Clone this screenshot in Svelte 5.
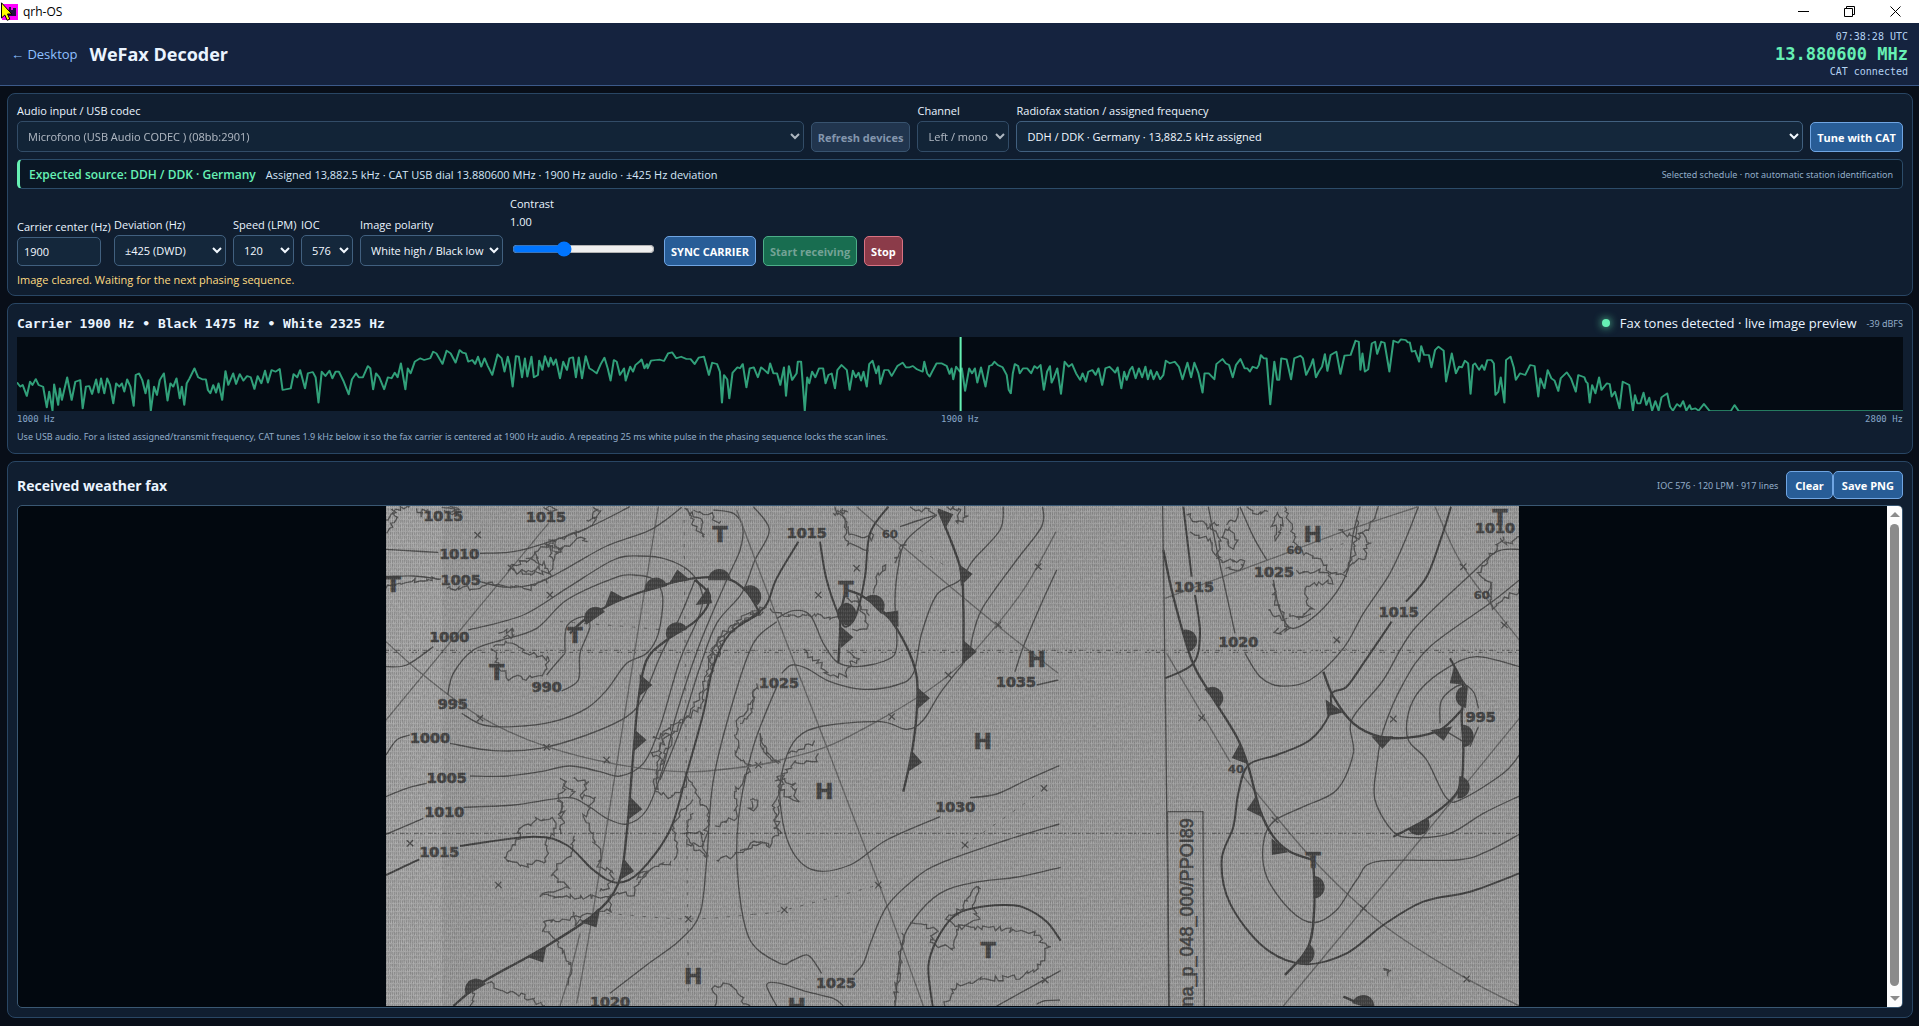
<!-- WeFax Decoder: receiver controls, audio spectrum and received chart -->
<script lang="ts">
  type Pt = [number, number];

  let device = $state("usb");
  let channel = $state("left");
  let station = $state("ddh");
  let carrier = $state("1900");
  let deviation = $state("425");
  let speed = $state("120");
  let ioc = $state("576");
  let polarity = $state("white");
  let contrast = $state(1);

  function parse(s: string, dx = 0): Pt[] {
    return s.trim().split(/\s+/).map((p) => {
      const [x, y] = p.split(",").map(Number);
      return [x + dx, y] as Pt;
    });
  }

  // Catmull-Rom through all the points
  function smooth(s: string): string {
    const p = parse(s);
    let d = `M${p[0][0]} ${p[0][1]}`;
    for (let i = 0; i < p.length - 1; i++) {
      const a = p[i - 1] ?? p[i];
      const b = p[i];
      const c = p[i + 1];
      const e = p[i + 2] ?? c;
      d += `C${b[0] + (c[0] - a[0]) / 6} ${b[1] + (c[1] - a[1]) / 6} `;
      d += `${c[0] - (e[0] - b[0]) / 6} ${c[1] - (e[1] - b[1]) / 6} ${c[0]} ${c[1]}`;
    }
    return d;
  }

  // Rough coastline between the points, always the same for the same input
  function coast(s: string): string {
    const p = parse(s);
    let seed = p[0][0] * 31 + p[0][1] * 17 + 7;
    const rnd = () => {
      seed = (seed * 1103515245 + 12345) % 2147483648;
      return seed / 2147483648 - 0.5;
    };
    let d = `M${p[0][0]} ${p[0][1]}`;
    for (let i = 1; i < p.length; i++) {
      const [x0, y0] = p[i - 1];
      const [x1, y1] = p[i];
      const n = Math.max(2, Math.round(Math.hypot(x1 - x0, y1 - y0) / 9));
      for (let k = 1; k <= n; k++) {
        const t = k / n;
        d += `L${(x0 + (x1 - x0) * t + rnd() * 16).toFixed(1)} ${(y0 + (y1 - y0) * t + rnd() * 16).toFixed(1)}`;
      }
    }
    return d;
  }

  const sweep = [
    ...parse(`42,277 50,290 56,285 66,318 74,275 80,285 88,267 95,285 106,290 115,352 121,305 129,362 133,283 143,345 147,295 152,330 165,262 176,330 185,275 197,270 203,355 211,290 219,288 226,312 236,268 242,308 248,265 256,310 263,265 270,285 278,340 285,280 293,290 299,280 305,305 312,268 320,290 328,348 333,255 341,250 349,270 357,310 364,270 370,362 378,290 385,315 392,270 402,250 411,332 418,280 425,290 433,265 441,325 446,290 452,345 458,280 465,265 477,235 486,262 496,268 505,268 510,300 516,310 523,285 530,308 536,280 545,330 553,243 560,285 572,250 579,282 588,252 597,272 606,258 615,262 624,297 632,258 641,280 650,242 657,278 666,240 676,245 686,237 693,300 713,295 720,252 729,262 736,240 748,295 755,250 767,246 774,262 781,338 789,245 798,258 808,242 815,265 823,245 831,245 843,275 855,313 863,268 873,250 880,262 890,262 902,228 908,235 915,298 922,250 930,262 942,298 951,262 960,265 968,248 975,262 983,220 994,298 1000,235 1007,250 1017,215 1030,205 1040,210 1055,205 1062,185 1070,190 1085,222 1095,182 1105,190 1117,218 1127,180 1134,188 1142,190 1148,215 1158,210 1165,222 1172,200 1180,230 1188,205 1196,228 1207,255 1220,193 1230,205 1237,245 1245,200 1250,225 1257,290 1265,198 1272,200 1280,262 1287,205 1293,260 1303,200 1309,262 1319,255 1322,212 1330,240 1336,198 1345,230 1350,203 1357,225 1363,208 1373,265 1381,215 1390,240 1396,205 1405,202 1412,262 1419,202 1427,265 1436,198 1445,235 1452,240 1463,250 1473,222 1482,203 1490,235 1497,272 1505,210 1512,215 1520,255 1530,235 1534,272 1545,230 1552,245 1558,225 1568,215`),
    ...parse(`5,208 12,235 18,222 20,235 28,212 40,210 50,209 60,213 70,190 80,187 90,205 102,200 115,207 125,207 135,222 145,203 158,200 170,255 178,218 190,222 197,245 202,338 207,255 215,268 220,325 228,248 240,232 246,235 253,222 262,292 270,235 280,232 290,262 298,232 306,240 315,250 320,220 328,250 337,250 345,285 354,232 359,318 366,228 374,270 385,250 388,215 396,215 405,362 411,262 416,280 423,245 431,262 440,235 450,235 456,280 463,255 471,250 479,295 485,240 495,225 508,240 515,300 523,242 530,262 537,248 543,272 549,245 557,290 563,222 571,212 580,250 586,228 590,282 600,240 610,240 618,258 632,228 645,218 653,232 662,232 670,228 680,238 694,245 698,215 705,250 711,260 718,243 728,220 740,220 753,228 760,252 765,235 769,268 776,230 785,245 790,235 798,303 808,235 815,250 822,235 828,278 837,232 848,290 857,228 864,225 870,215 878,225 890,232 900,255 905,300 910,310 915,250 920,222 928,228 932,250 940,235 950,235 960,250 968,228 975,235 983,225 991,300 999,245 1006,228 1010,278 1016,262 1024,235 1033,312 1042,215 1052,230 1060,222 1070,250 1080,270 1086,250 1094,275 1100,245 1110,240 1118,255 1125,235 1134,285 1142,235 1152,230 1160,240 1166,248 1172,232 1181,295 1188,245 1194,270 1202,240 1208,230 1216,265 1224,235 1232,262 1240,230 1246,268 1253,240 1260,268 1268,245 1276,268 1284,255 1290,212 1300,220 1312,215 1322,230 1331,268 1343,218 1352,262 1360,218 1370,250 1380,308 1385,250 1395,250 1409,268 1414,222 1429,207 1437,220 1445,225 1454,262 1462,225 1473,207 1483,235 1490,235 1496,245 1503,230 1513,235 1518,225 1523,195 1530,205 1537,205 1546,343 1556,215 1563,270`, 1568),
    ...parse(`0,270 5,205 18,208 29,268 37,205 52,197 58,205 66,255 78,225 83,207 90,262 97,245 105,230 112,192 118,243 126,195 140,185 150,252 160,197 175,195 187,152 195,155 199,240 204,190 210,245 218,238 227,160 235,155 240,192 250,155 258,158 270,245 280,152 292,158 298,148 310,150 315,157 320,157 325,185 333,182 343,215 348,168 355,195 367,195 373,232 382,180 390,170 403,182 409,275 423,190 433,250 441,230 448,232 455,212 463,220 469,312 475,225 480,220 490,240 497,225 503,240 510,210 520,210 526,220 530,315 537,305 543,262 552,338 556,210 567,200 575,232 580,270 590,250 603,255 615,225 626,228 635,320 640,265 650,295 658,240 667,265 675,272 684,303 690,265 705,247 715,265 727,305 733,255 748,262 752,275 756,280 761,338 767,285 775,310 784,262 790,300 803,280 810,282 815,320 823,305 834,355 842,275 858,285 867,362 872,315 878,340 885,340 893,308 900,345 907,323 914,362 922,333 930,362 937,322 951,310 958,350 965,362 975,342 983,350 990,333 998,362 1006,345 1010,358 1020,355 1028,362 1041,342 1055,363 1107,363 1116,345 1126,363 1529,363`, 3136),
  ];
  const trace = sweep.map((p) => p.join(",")).join(" ");

  // The chart is stored as three sheets side by side
  const sheets = [
    {
      x: 0,
      thin: [
        "18,148 100,153 175,157",
        "300,160 400,155 500,128 620,85 750,20",
        "18,230 100,228 180,238",
        "300,245 380,262 470,250 560,205 680,138 800,95 850,65 905,22",
        "265,390 430,345 560,265 700,180 780,168 860,178 930,215 965,275 960,340 900,480 840,680 790,790 720,828 660,815 570,798 480,815 380,828 270,828",
        "365,420 470,385 560,300 700,235 760,225 820,238 848,290 835,400 800,460 740,490 680,570 620,625 520,665 400,680 310,675 245,640",
        "365,420 280,450 220,520 203,585",
        "18,500 80,495 160,440",
        "210,730 340,752 480,745 620,705 740,650 790,590 840,470 900,350 945,240",
        "18,765 50,720 90,705",
        "18,890 80,865 140,850",
        "250,922 400,915 560,893 620,915 680,955 740,972 800,930 850,800 890,640 960,430 1040,240 1080,150 1088,80 1060,40 1000,30",
        "18,1003 60,985 130,955",
        "1190,365 1120,430 1060,600 1000,840 980,1080 960,1240 900,1320 800,1395 690,1480",
        "1190,560 1120,740 1075,960 1075,1150 1110,1320 1200,1390 1240,1380 1285,1366 1325,1420",
        "1120,20 1168,90 1125,180 1085,280 1010,370 960,500 900,690 840,840",
        "555,460 560,380 610,350 630,380 600,460 595,540 545,573",
        "555,460 520,500 500,525",
      ],
      bold: [
        "240,1038 460,1010 560,1035 640,1110 710,1148 780,1115 870,990 920,820 970,640 1000,500 1050,400 1140,340",
        "18,1125 118,1078",
      ],
      fronts: [
        "570,400 620,355 720,300 850,255 940,235 1040,235 1100,275 1140,340",
        "945,240 990,290 950,360 860,420 800,480 775,600 760,760 740,1000 715,1150 640,1245 480,1350 310,1445 220,1518",
      ],
      grid: [
        "18,660 505,70",
        "835,20 760,480 640,1230 590,1510",
        "600,1300 570,1420 540,1518",
        "18,425 130,525 300,650 500,740 750,800 950,815 1200,785",
      ],
      dots: ["912,60 925,1500", "680,1240 925,1257 1120,1243", "540,365 780,383 930,400"],
      coasts: [
        "340,440 400,425 440,455 510,480 490,530 380,535 345,480 340,440",
        "355,400 400,388 405,410 370,412",
        "18,60 60,30 90,18", "20,100 50,50 35,20", "110,25 125,50 140,20",
        "185,22 235,26 190,34 232,38 205,20", "490,22 525,28 495,30",
        "390,200 440,185 490,140 540,120 600,95 640,70 650,30",
        "420,215 500,220 490,190 440,180", "500,130 530,160 600,110 630,130",
        "400,210 450,225 480,195 470,160", "505,120 540,150 520,180",
        "620,60 665,40 640,25", "500,250 520,180 500,130 550,150",
        "200,265 260,265 330,250 440,270 500,240", "18,265 100,240 180,235",
        "920,25 960,60 975,115 940,80 920,25", "940,30 990,45 1020,70",
        "1160,320 1090,350 1040,390 1000,440 970,560 920,650 850,700 830,800 830,870",
        "1150,335 1080,370 1030,410 1005,480 960,620 900,670 870,730 840,800",
        "1140,330 1060,380 1020,420 985,470 1000,490",
        "820,715 870,700 820,760 850,790 825,840 830,870 870,895 910,860 920,820",
        "540,835 560,850 540,880 550,940 545,1000", "535,900 550,930 535,960",
        "580,835 625,850 600,890 645,890 610,950 640,1020 660,1060 655,1100 690,1110 700,1140 660,1180",
        "550,850 580,870 575,885", "480,1190 560,1160 520,1120 545,1080 580,1060 580,1000",
        "480,1190 600,1190 650,1190 760,1180 780,1140 830,1100 880,1090",
        "415,985 470,960 520,960 525,1000 500,1020 500,1080 440,1095 380,1085 380,1050 415,1025 415,985",
        "940,900 900,930 880,980 890,1080", "940,940 920,1000 940,1040 980,1070 960,990 915,1000",
        "920,820 960,900 985,940 975,1020 950,1040 920,1020",
        "1130,550 1110,620 1070,670 1070,770 1110,790 1090,850 1060,880 1075,950 1010,980",
        "1010,1080 1080,1060 1130,1020 1170,1040", "1140,700 1160,770 1200,785",
        "490,1265 550,1265 620,1240 690,1230 690,1190", "490,1290 530,1320 570,1390 570,1450",
        "580,1235 590,1270 620,1260", "490,1265 490,1300",
        "320,1450 370,1470 440,1490 500,1518", "280,1470 275,1518",
        "1005,1518 1000,1460 1050,1450 1070,1480 1110,1518", "770,1140 800,1110 780,1130",
      ],
      domes: [[645, 352, -35], [828, 264, -15], [1018, 238, 0], [1112, 288, 50], [890, 398, -25], [287, 1467, -30]],
      spikes: [[705, 305, -20], [898, 243, -10], [968, 290, 125], [782, 555, 90], [765, 720, 90], [752, 925, 95], [728, 1108, 100], [632, 1252, 150], [472, 1357, 150]],
      crosses: [[293, 105], [510, 285], [300, 655], [500, 742], [90, 1030], [355, 1155], [925, 1257], [680, 780], [1135, 795], [393, 203]],
      labels: [[190, 62, "1015"], [498, 65, "1015"], [238, 176, "1010"], [242, 254, "1005"], [208, 427, "1000"], [500, 575, "990"], [218, 628, "995"], [150, 730, "1000"], [200, 850, "1005"], [193, 950, "1010"], [178, 1070, "1015"], [690, 1520, "1020"]],
      centres: [[1020, 127, "T"], [585, 428, "T"], [350, 540, "T"], [40, 277, "T"], [940, 1452, "H"]],
      degrees: [],
    },
    {
      x: 1080,
      thin: [
        "670,490 600,580 550,660 500,688 420,665 250,678 170,715 130,800 120,900 150,1040 220,1110 330,1095 440,1020 600,950",
        "690,893 770,882 860,840 958,797",
        "590,45 500,120 475,200 465,300 470,440 440,480 350,500 290,485 250,430 210,345 160,332 110,355",
        "480,80 540,60 590,45",
        "790,20 780,90 700,180 660,240 590,285 545,400 520,520 470,555 370,568 270,545 200,505 155,495 125,520",
        "908,20 905,80 830,180 730,320 700,400 690,450 670,490",
        "950,210 900,320 850,440 825,515",
        "890,555 955,540",
        "958,972 800,1020 600,1090 520,1140 440,1220 395,1320 370,1390 340,1425",
        "962,1102 840,1130 700,1148 600,1180 520,1260 485,1340 465,1518",
        "770,1518 962,1412",
        "890,1512 915,1502 960,1500",
        "110,1518 80,1455 120,1450 200,1475 280,1495 310,1518",
      ],
      bold: [
        "175,125 110,235 75,320 0,375",
        "240,125 260,240 300,355 320,380 350,340 375,230 390,100 445,20",
        "578,1518 565,1400 590,1320 640,1250 700,1225 790,1215 850,1222 920,1265 962,1322",
      ],
      fronts: [
        "318,270 302,340 300,400 295,490",
        "320,270 370,290 440,345 500,440 530,530 530,640 515,760 490,875",
        "595,30 660,200 670,320 670,490",
      ],
      grid: [
        "948,95 850,270 715,440 620,530 520,600 400,670 260,740 100,785 0,803",
        "350,20 500,150 770,375 955,520",
        "-10,30 110,350 260,740 420,1160 490,1350 550,1518",
      ],
      dots: ["40,1243 133,1230 415,1155", "912,865 840,920 740,990 675,1035", "540,150 620,200"],
      coasts: [
        "285,20 310,60 320,130 380,145", "300,30 330,100 390,115 400,105", "280,40 320,30 300,20",
        "400,280 410,230 440,200 430,220", "465,190 480,150 495,130", "190,450 230,480 260,520 320,530 330,490 360,475 320,460",
        "350,285 370,350 380,390 340,390", "320,295 360,310 390,340", "145,760 190,740 225,725", "235,760 225,785 160,785 130,830",
        "110,830 160,850 170,900 130,890 125,830 105,850", "510,20 590,40", "620,20 660,30 650,70 680,50 680,20",
        "0,1050 60,1030 90,1040 110,1000 100,920 120,850", "120,1000 110,960 115,900",
        "650,1240 680,1200 720,1155 700,1210 715,1260 640,1280 620,1250 650,1240",
        "510,1270 590,1290 570,1320 600,1340 640,1345 660,1280 780,1285 880,1300 925,1340 900,1400 840,1430 710,1440 650,1460 610,1518",
        "0,670 30,650 40,560", "60,700 80,760 120,785", "90,325 160,350 210,345 290,355",
        "30,900 45,895 48,920 32,930 30,900", "485,1300 480,1400 460,1518",
      ],
      domes: [[402, 316, 45], [318, 342, 90], [322, 342, -90]],
      spikes: [[452, 358, 40], [305, 412, 90], [607, 55, 70], [663, 225, 85], [675, 455, 90], [535, 595, 90], [512, 783, 98]],
      crosses: [[350, 205], [235, 285], [625, 525], [455, 650], [675, 1035], [912, 865], [895, 200], [133, 1230], [415, 1155], [915, 1440], [775, 375]],
      labels: [[200, 113, "1015"], [117, 563, "1025"], [828, 560, "1035"], [646, 937, "1030"], [288, 1463, "1025"]],
      centres: [[890, 500, "H"], [728, 748, "H"], [253, 898, "H"], [745, 1375, "T"], [170, 1541, "H"], [318, 290, "T"]],
      degrees: [[450, 115, "60"]],
    },
    {
      x: 2250,
      thin: [
        "235,20 265,170 315,400",
        "345,460 390,530 450,558 540,540 640,445 700,340 780,220 830,110 865,20",
        "330,20 370,110 410,180",
        "430,240 450,330 490,385 580,325 650,220 670,100 690,20",
        "1168,148 1100,155 1020,225 850,390 760,540 665,660 670,760 620,870 520,920 430,965 400,1030 410,1130 480,1230 550,1268 620,1230 680,1140 740,1085 980,1080 1070,1055 1168,1003",
        "1168,240 1080,310 900,440 820,550 760,690 740,800 735,900 790,995 850,1013 960,1000 1060,940 1168,888",
        "1168,500 1040,470 950,505 870,570 835,640 835,720 890,780 950,895 1000,895 1120,820 1168,765",
        "930,670 935,600 990,555 1030,575 1045,625",
        "1045,680 1020,740", "1000,725 950,695", "98,18 105,520 118,1518",
      ],
      bold: [
        "160,20 185,230",
        "195,285 210,400 190,490 105,535",
        "963,20 935,110 890,230 828,305",
        "785,365 700,490 650,560 605,580 600,640 540,720 440,765 355,795 325,880 310,980 275,1080 300,1210 400,1340 520,1392 650,1360 760,1275 880,1205 1020,1175 1168,1120",
      ],
      fronts: [
        "100,150 130,290 185,480 240,580 320,710 355,800 390,930 430,1010 480,1055 550,1080",
        "550,1080 553,1220 535,1340 465,1425",
        "580,515 610,590 670,670 750,710 840,712 930,690 995,630",
        "960,475 1000,560 995,650 1000,760 985,870 900,950 790,1010",
        "640,1490 700,1515",
      ],
      grid: [
        "110,460 300,785", "340,830 550,1080 760,1275 1000,1430 1168,1518",
        "1168,655 870,1020 460,1518", "915,20 1000,200 1168,420", "105,295 400,185 640,95 865,20",
      ],
      dots: ["600,390 650,450", "600,150 640,130"],
      coasts: [
        "170,45 200,60 240,80 270,70", "180,95 240,120 270,180 350,185 320,215 290,200", "300,80 280,110 310,145 320,120 295,90",
        "350,20 380,45 410,30", "443,35 455,70 443,115 432,75 443,35", "465,20 490,100 500,150 560,170 600,220 650,225",
        "415,330 450,350 480,385 440,400 435,380", "430,250 440,310 470,360", "500,350 545,330 520,260 610,245 580,215 500,215",
        "480,340 500,360 540,345", "625,90 680,120 720,80 740,20", "650,215 700,170 715,120 690,100", "640,220 670,160 680,60",
        "1120,110 1080,170 1050,220 1090,260 1070,290", "1168,110 1140,130 1110,120",
        "1080,250 1090,320 1130,290 1168,270", "240,70 270,120 265,180", "290,75 330,50 330,20",
        "760,1405 785,1415 770,1422 760,1405",
      ],
      domes: [[170, 422, 75], [248, 592, 50], [1008, 590, -85], [1000, 708, 90], [988, 862, 95], [866, 974, 150], [553, 1162, 90], [522, 1362, 120], [700, 1516, 15]],
      spikes: [[338, 762, -110], [384, 920, -105], [448, 1038, -140], [612, 620, 215], [757, 712, 180], [935, 688, 170], [988, 530, -125]],
      crosses: [[620, 420], [790, 657], [215, 653], [435, 960], [700, 1225], [1010, 1437], [1000, 200], [1123, 375]],
      labels: [[192, 277, "1015"], [432, 232, "1025"], [325, 440, "1020"], [806, 350, "1015"], [1095, 100, "1010"], [1052, 667, "995"]],
      centres: [[548, 127, "H"], [1110, 75, "T"], [550, 1105, "T"]],
      degrees: [[493, 163, "60"], [1055, 298, "60"], [318, 820, "40"]],
    },
  ];
</script>

<div class="window">
  <div class="titlebar">
    <svg class="app-icon" viewBox="0 0 20 20" aria-hidden="true">
      <rect x="2" y="2" width="16" height="16" fill="#ff00ff" />
      <path d="M9 5h2v3h2V6h3v8H8z" fill="#231042" />
      <path d="M1.500 .8V16l3.300-3 2.400 5.300 2.600-1.200-2.300-5.100h4.300z" fill="#ffff00" stroke="#000" stroke-width="1" />
    </svg>
    <span class="app-name">qrh-OS</span>
    <div class="window-buttons">
      <button aria-label="Minimize">
        <svg viewBox="0 0 11 11"><path d="M0 5.500h11" /></svg>
      </button>
      <button aria-label="Restore">
        <svg viewBox="0 0 11 11"><path d="M.5 2.500h8v8h-8zM2.500 2.500v-2h8v8h-2" /></svg>
      </button>
      <button aria-label="Close">
        <svg viewBox="0 0 11 11"><path d="M.5 .5l10 10M10.500 .5l-10 10" /></svg>
      </button>
    </div>
  </div>

  <header>
    <a href="#desktop">← Desktop</a>
    <h1>WeFax Decoder</h1>
    <div class="rig">
      <span>07:38:28 UTC</span>
      <strong>13.880600 MHz</strong>
      <span>CAT connected</span>
    </div>
  </header>

  <main>
    <section class="panel controls">
      <div class="source-row">
        <label>
          Audio input / USB codec
          <select bind:value={device} disabled>
            <option value="usb">Microfono (USB Audio CODEC ) (08bb:2901)</option>
          </select>
        </label>
        <button class="btn neutral" disabled>Refresh devices</button>
        <label class="w-channel">
          Channel
          <select bind:value={channel} disabled>
            <option value="left">Left / mono</option>
          </select>
        </label>
        <label>
          Radiofax station / assigned frequency
          <select bind:value={station}>
            <option value="ddh">DDH / DDK · Germany · 13,882.5 kHz assigned</option>
          </select>
        </label>
        <button class="btn">Tune with CAT</button>
      </div>

      <div class="expected">
        <strong>Expected source: DDH / DDK · Germany</strong>
        <span>Assigned 13,882.5 kHz · CAT USB dial 13.880600 MHz · 1900 Hz audio · ±425 Hz deviation</span>
        <small>Selected schedule · not automatic station identification</small>
      </div>

      <div class="tuning-row">
        <label class="w-carrier">
          Carrier center (Hz)
          <input type="text" bind:value={carrier} />
        </label>
        <label class="w-deviation">
          Deviation (Hz)
          <select bind:value={deviation}>
            <option value="425">±425 (DWD)</option>
          </select>
        </label>
        <label class="w-speed">
          Speed (LPM)
          <select bind:value={speed}>
            <option value="120">120</option>
          </select>
        </label>
        <label class="w-ioc">
          IOC
          <select bind:value={ioc}>
            <option value="576">576</option>
          </select>
        </label>
        <label class="w-polarity">
          Image polarity
          <select bind:value={polarity}>
            <option value="white">White high / Black low</option>
          </select>
        </label>
        <label class="w-contrast">
          Contrast
          <output>{contrast.toFixed(2)}</output>
          <input type="range" min="0.3" max="2.3" step="0.05" bind:value={contrast} />
        </label>
        <button class="btn">SYNC CARRIER</button>
        <button class="btn start" disabled>Start receiving</button>
        <button class="btn stop">Stop</button>
      </div>

      <p class="notice">Image cleared. Waiting for the next phasing sequence.</p>
    </section>

    <section class="panel">
      <div class="spectrum-head">
        <strong>Carrier 1900 Hz • Black 1475 Hz • White 2325 Hz</strong>
        <div class="signal">
          <i class="lamp"></i>
          <span>Fax tones detected · live image preview</span>
          <small>-39 dBFS</small>
        </div>
      </div>
      <svg class="spectrum" viewBox="42 141 4623 222" preserveAspectRatio="none" role="img" aria-label="Audio spectrum">
        <polyline class="trace" points={trace} />
        <path class="marker" d="M2355 141v222" />
      </svg>
      <div class="scale">
        <span>1000 Hz</span>
        <span>1900 Hz</span>
        <span>2800 Hz</span>
      </div>
      <p class="help">
        Use USB audio. For a listed assigned/transmit frequency, CAT tunes 1.9 kHz below it so the fax carrier is centered at 1900 Hz audio. A repeating 25 ms white pulse in the phasing sequence locks the scan lines.
      </p>
    </section>

    <section class="panel fax">
      <div class="fax-head">
        <h2>Received weather fax</h2>
        <small>IOC 576 · 120 LPM · 917 lines</small>
        <div class="fax-actions">
          <button class="btn">Clear</button>
          <button class="btn">Save PNG</button>
        </div>
      </div>

      <div class="viewport">
        <div class="paper">
          <svg class="chart" viewBox="18 18 3399 1500" role="img" aria-label="Weather chart">
            <defs>
              <filter id="grain" x="0" y="0" width="100%" height="100%">
                <feTurbulence type="fractalNoise" baseFrequency="0.3 0.12" numOctaves="2" seed="4" />
                <feColorMatrix values="0 0 0 0 0  0 0 0 0 0  0 0 0 0 0  1.600 0 0 0 -0.550" />
              </filter>
              <pattern id="weave" width="6" height="12" patternUnits="userSpaceOnUse">
                <rect x="0" y="0" width="3" height="9" fill="#000" opacity="0.110" />
                <rect x="3" y="6" width="3" height="6" fill="#fff" opacity="0.070" />
              </pattern>
            </defs>
            <rect x="18" y="18" width="3399" height="1500" fill="#a0a0a0" />
            <rect x="18" y="18" width="169" height="1500" fill="#a9a9a9" />

            {#each sheets as sheet}
              <g transform="translate({sheet.x} 0)">
                {#each sheet.grid as line}<path class="grid" d={smooth(line)} />{/each}
                {#each sheet.dots as line}<path class="dots" d={smooth(line)} />{/each}
                {#each sheet.coasts as line}<path class="coast" d={coast(line)} />{/each}
                {#each sheet.thin as line}<path class="isobar" d={smooth(line)} />{/each}
                {#each sheet.bold as line}<path class="isobar bold" d={smooth(line)} />{/each}
                {#each sheet.fronts as line}<path class="front" d={smooth(line)} />{/each}
                {#each sheet.domes as [x, y, a]}
                  <path class="mark" d="M-34 3a34 34 0 0 1 68 0z" transform="translate({x} {y}) rotate({a})" />
                {/each}
                {#each sheet.spikes as [x, y, a]}
                  <path class="mark" d="M-33 3L0-35L33 3z" transform="translate({x} {y}) rotate({a})" />
                {/each}
                {#each sheet.crosses as [x, y]}
                  <path class="cross" d="M{x - 10} {y - 9}l20 18M{x + 9} {y - 10}l-18 20" />
                {/each}
                {#each sheet.labels as [x, y, text]}<text class="hpa" {x} {y}>{text}</text>{/each}
                {#each sheet.centres as [x, y, text]}<text class="centre" {x} {y}>{text}</text>{/each}
                {#each sheet.degrees as [x, y, text]}<text class="degree" {x} {y}>{text}</text>{/each}
              </g>
            {/each}

            <path class="isobar" d="M2366 1518L2362 935H2469L2473 1518" />
            <text class="sheet-id" transform="translate(2439 955) rotate(-90)">na_p_048_000/PPOI89</text>

            <path class="glitch" d="M18 451H3417" />
            <path class="glitch second" d="M18 457H3417" />
            <path class="glitch low" d="M18 1000H3417" />
            <rect x="18" y="18" width="3399" height="1500" fill="url(#weave)" />
            <rect x="18" y="18" width="3399" height="1500" filter="url(#grain)" opacity="0.160" />
          </svg>
        </div>
        <div class="scrollbar" aria-hidden="true">
          <i class="arrow up"></i>
          <i class="thumb"></i>
          <i class="arrow down"></i>
        </div>
      </div>
    </section>
  </main>
</div>

<style>
  :global(body) {
    margin: 0;
    background: #080e18;
  }

  .window {
    display: flex;
    flex-direction: column;
    height: 100vh;
    box-sizing: border-box;
    font-family: "Open Sans", "Noto Sans", sans-serif;
    font-size: 11px;
    color: #eaf4ff;
  }

  small,
  .help {
    font-family: "Noto Sans", "Open Sans", sans-serif;
    font-size: 9px;
    color: #92adc8;
  }

  .titlebar {
    display: flex;
    align-items: center;
    height: 23px;
    padding-right: 1px;
    background: #fff;
    color: #000;
    font-size: 12px;
  }

  .app-icon {
    width: 20px;
    height: 20px;
    margin-right: 3px;
  }

  .window-buttons {
    display: flex;
    margin-left: auto;
  }

  .window-buttons button {
    width: 46px;
    height: 20px;
    padding: 0;
    border: 0;
    background: none;
    line-height: 0;
  }

  .window-buttons svg {
    width: 11px;
    height: 11px;
    fill: none;
    stroke: #000;
    stroke-width: 1;
  }

  header {
    display: flex;
    align-items: center;
    gap: 12px;
    height: 62px;
    padding: 0 11px;
    background: #15233f;
    border-bottom: 1px solid #3c5a8a;
  }

  header a {
    color: #8fc1ff;
    font-size: 13px;
    text-decoration: none;
  }

  h1 {
    margin: 0;
    font-size: 18px;
    font-weight: 700;
  }

  .rig {
    display: flex;
    flex-direction: column;
    align-items: flex-end;
    margin-left: auto;
    font-family: "DejaVu Sans Mono", monospace;
    font-size: 10px;
    line-height: 15px;
    color: #b4d2f2;
  }

  .rig strong {
    font-size: 17px;
    line-height: 20px;
    color: #66f0b4;
  }

  main {
    display: flex;
    flex: 1;
    flex-direction: column;
    gap: 7px;
    min-height: 0;
    padding: 7px 6px 8px 7px;
  }

  .panel {
    padding: 9px;
    background: #101e30;
    border: 1px solid #294664;
    border-radius: 8px;
  }

  .controls {
    display: flex;
    flex-direction: column;
    gap: 7px;
  }

  label {
    display: flex;
    flex-direction: column;
    gap: 3px;
    line-height: 15px;
    white-space: nowrap;
  }

  select,
  input[type="text"] {
    box-sizing: border-box;
    width: 100%;
    height: 31px;
    padding: 6px 1px 6px 6px;
    font: inherit;
    color: #f2f8ff;
    background-color: #14273b;
    border: 1px solid #41607f;
    border-radius: 5px;
  }

  select:disabled {
    opacity: 0.7;
  }

  input[type="text"] {
    width: 84px;
    height: 29px;
  }

  input[type="range"] {
    width: 143px;
    height: 30px;
    margin: 2px;
  }

  .source-row {
    display: grid;
    grid-template-columns: 1fr auto auto 1fr auto;
    align-items: end;
    gap: 7px;
  }

  .btn {
    height: 30px;
    padding: 0 6px;
    font: inherit;
    font-weight: 700;
    color: #fff;
    white-space: nowrap;
    background: #285d97;
    border: 1px solid #70a5e2;
    border-radius: 5px;
  }

  .btn.neutral {
    color: #8496ad;
    background: #21354e;
    border-color: #38536f;
  }

  .btn.start {
    color: #74a396;
    background: #186d50;
    border-color: #4cae88;
  }

  .btn.stop {
    background: #8b3b49;
    border-color: #d97282;
  }

  .w-channel {
    width: 92px;
  }

  .w-carrier {
    width: 90px;
  }

  .w-deviation {
    width: 112px;
  }

  .w-speed {
    width: 61px;
  }

  .w-ioc {
    width: 52px;
  }

  .w-polarity {
    width: 143px;
  }

  .w-contrast {
    width: 147px;
  }

  .expected {
    display: flex;
    align-items: center;
    gap: 10px;
    height: 28px;
    padding: 0 9px;
    background: #0a1725;
    border: 1px solid #2c4c69;
    border-left: 3px solid #66f0b4;
    border-radius: 5px;
    color: #d5e6f7;
  }

  .expected strong {
    font-size: 12px;
    font-weight: 600;
    color: #66f0b4;
  }

  .expected small {
    margin-left: auto;
  }

  .tuning-row {
    display: flex;
    align-items: flex-end;
    gap: 7px;
  }

  .notice {
    margin: 0;
    line-height: 13px;
    color: #ffdc82;
  }

  .spectrum-head {
    display: flex;
    align-items: center;
    justify-content: space-between;
    height: 20px;
    margin-bottom: 4px;
  }

  .spectrum-head strong {
    font-family: "DejaVu Sans Mono", monospace;
    font-size: 13px;
  }

  .signal {
    display: flex;
    align-items: center;
    gap: 10px;
    font-size: 13px;
  }

  .lamp {
    width: 8px;
    height: 8px;
    border-radius: 50%;
    background: #66f0b4;
    box-shadow: 0 0 8px #66f0b4;
  }

  .spectrum {
    display: block;
    width: 100%;
    height: 74px;
    background: #040b13;
  }

  .trace {
    fill: none;
    stroke: #31a07a;
    stroke-width: 5;
    stroke-linejoin: round;
  }

  .marker {
    fill: none;
    stroke: #66f0b4;
    stroke-width: 5;
  }

  .scale {
    display: flex;
    justify-content: space-between;
    font-family: "DejaVu Sans Mono", monospace;
    font-size: 9px;
    line-height: 17px;
    color: #86a5c6;
  }

  .help {
    margin: 2px 0 0;
    line-height: 14px;
  }

  .fax {
    display: flex;
    flex: 1;
    flex-direction: column;
    min-height: 0;
  }

  .fax-head {
    display: flex;
    align-items: center;
    gap: 8px;
    height: 28px;
    margin-bottom: 6px;
  }

  h2 {
    margin: 0 auto 0 0;
    font-size: 14px;
    font-weight: 700;
  }

  .fax-actions {
    display: flex;
  }

  .fax-actions .btn {
    height: 28px;
    padding: 0 8px;
  }

  .viewport {
    display: flex;
    flex: 1;
    min-height: 0;
    overflow: hidden;
    background: #02080f;
    border: 1px solid #3a5873;
    border-radius: 5px;
  }

  .paper {
    flex: 1;
    overflow: hidden;
  }

  .chart {
    display: block;
    width: 1133px;
    max-width: 100%;
    margin: 0 auto;
  }

  .isobar,
  .front,
  .grid,
  .dots,
  .coast,
  .cross {
    fill: none;
    stroke: #525252;
    stroke-width: 4;
  }

  .isobar.bold {
    stroke: #464646;
    stroke-width: 6;
  }

  .front {
    stroke: #464646;
    stroke-width: 7;
  }

  .grid {
    stroke: #6a6a6a;
    stroke-width: 4;
  }

  .dots {
    stroke: #6a6a6a;
    stroke-width: 3;
    stroke-dasharray: 10 26;
  }

  .coast {
    stroke: #585858;
    stroke-width: 4;
  }

  .cross {
    stroke-width: 4;
  }

  .mark {
    fill: #484848;
  }

  .hpa,
  .centre,
  .degree {
    font-family: "DejaVu Sans", sans-serif;
    font-weight: 700;
    font-size: 43px;
    text-anchor: middle;
    fill: #484848;
    stroke: #484848;
    stroke-width: 2;
  }

  .centre {
    font-size: 66px;
  }

  .degree {
    font-size: 34px;
    stroke-width: 1;
  }

  .sheet-id {
    font-family: "Liberation Sans", sans-serif;
    font-size: 54px;
    text-anchor: end;
    fill: #484848;
    stroke: #484848;
    stroke-width: 2;
  }

  .glitch {
    stroke: #3c3c3c;
    stroke-width: 3;
    stroke-dasharray: 9 5 3 11 14 4 3 20 6 7;
    opacity: 0.7;
  }

  .glitch.second {
    stroke-dasharray: 5 17 12 9 3 31 7 4;
  }

  .glitch.low {
    stroke-dasharray: 14 4 7 5 3 9;
    opacity: 0.6;
  }

  .scrollbar {
    display: flex;
    flex-direction: column;
    align-items: center;
    width: 15px;
    padding: 6px 0;
    box-sizing: border-box;
    background: #fcfcfc;
  }

  .arrow {
    border: 5px solid transparent;
    border-top-width: 0;
    border-bottom-color: #8b8b8b;
  }

  .arrow.down {
    border-top: 5px solid #8b8b8b;
    border-bottom-width: 0;
  }

  .thumb {
    flex: 1;
    width: 9px;
    margin: 7px 0 10px;
    border-radius: 5px;
    background: #8b8b8b;
  }
</style>
